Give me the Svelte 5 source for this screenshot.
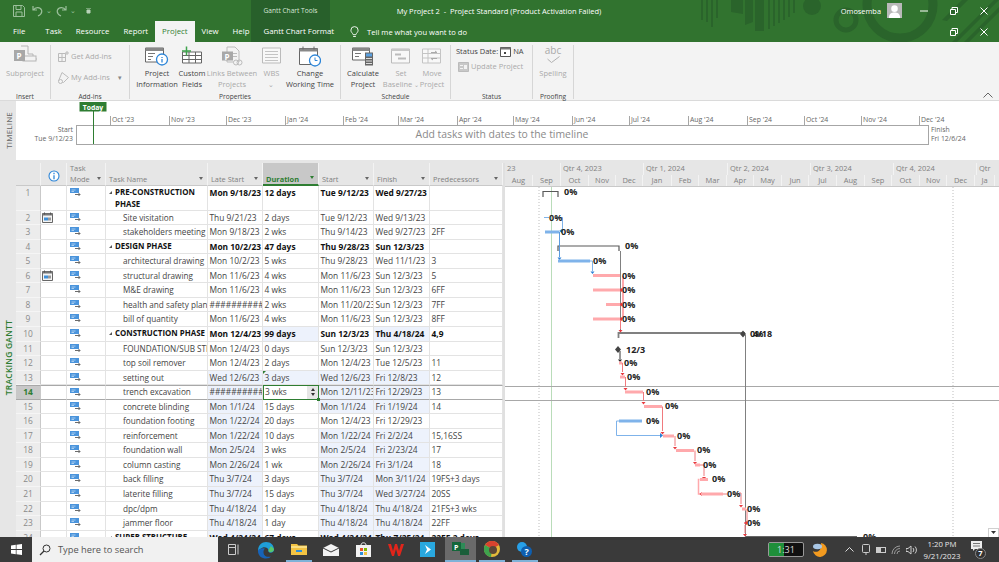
<script>
  const tabs = ['Task', 'Resource', 'Report'];

  // id, name, late start, duration, start, finish, predecessors, summary, tinted columns
  const rows = [
    [1, 'PRE-CONSTRUCTION PHASE', 'Mon 9/18/23', '12 days', 'Tue 9/12/23', 'Wed 9/27/23', '', true, ''],
    [2, 'Site visitation', 'Thu 9/21/23', '2 days', 'Tue 9/12/23', 'Wed 9/13/23', '', false, ''],
    [3, 'stakeholders meeting', 'Mon 9/18/23', '2 wks', 'Thu 9/14/23', 'Wed 9/27/23', '2FF', false, ''],
    [4, 'DESIGN PHASE', 'Mon 10/2/23', '47 days', 'Thu 9/28/23', 'Sun 12/3/23', '', true, ''],
    [5, 'architectural drawing', 'Mon 10/2/23', '5 wks', 'Thu 9/28/23', 'Wed 11/1/23', '3', false, ''],
    [6, 'structural drawing', 'Mon 11/6/23', '4 wks', 'Mon 11/6/23', 'Sun 12/3/23', '5', false, ''],
    [7, 'M&E drawing', 'Mon 11/6/23', '4 wks', 'Mon 11/6/23', 'Sun 12/3/23', '6FF', false, ''],
    [8, 'health and safety plan', '##############', '2 wks', 'Mon 11/20/23', 'Sun 12/3/23', '7FF', false, ''],
    [9, 'bill of quantity', 'Mon 11/6/23', '4 wks', 'Mon 11/6/23', 'Sun 12/3/23', '8FF', false, ''],
    [10, 'CONSTRUCTION PHASE', 'Mon 12/4/23', '99 days', 'Sun 12/3/23', 'Thu 4/18/24', '4,9', true, 'df'],
    [11, 'FOUNDATION/SUB STRUCTURE', 'Mon 12/4/23', '0 days', 'Sun 12/3/23', 'Sun 12/3/23', '', false, ''],
    [12, 'top soil remover', 'Mon 12/4/23', '2 days', 'Mon 12/4/23', 'Tue 12/5/23', '11', false, ''],
    [13, 'setting out', 'Wed 12/6/23', '3 days', 'Wed 12/6/23', 'Fri 12/8/23', '12', false, 'ldsf'],
    [14, 'trench excavation', '##############', '3 wks', 'Mon 12/11/23', 'Fri 12/29/23', '13', false, 'lsf'],
    [15, 'concrete blinding', 'Mon 1/1/24', '15 days', 'Mon 1/1/24', 'Fri 1/19/24', '14', false, 'lsf'],
    [16, 'foundation footing', 'Mon 1/22/24', '20 days', 'Mon 12/4/23', 'Fri 12/29/23', '', false, 'l'],
    [17, 'reinforcement', 'Mon 1/22/24', '10 days', 'Mon 1/22/24', 'Fri 2/2/24', '15,16SS', false, 'lsf'],
    [18, 'foundation wall', 'Mon 2/5/24', '3 wks', 'Mon 2/5/24', 'Fri 2/23/24', '17', false, 'lsf'],
    [19, 'column casting', 'Mon 2/26/24', '1 wk', 'Mon 2/26/24', 'Fri 3/1/24', '18', false, 'lsf'],
    [20, 'back filling', 'Thu 3/7/24', '3 days', 'Thu 3/7/24', 'Mon 3/11/24', '19FS+3 days', false, 'lsf'],
    [21, 'laterite filling', 'Thu 3/7/24', '15 days', 'Thu 3/7/24', 'Wed 3/27/24', '20SS', false, 'lsf'],
    [22, 'dpc/dpm', 'Thu 4/18/24', '1 day', 'Thu 4/18/24', 'Thu 4/18/24', '21FS+3 wks', false, 'lsf'],
    [23, 'jammer floor', 'Thu 4/18/24', '1 day', 'Thu 4/18/24', 'Thu 4/18/24', '22FF', false, 'lsf'],
    [24, 'SUPER STRUCTURE', 'Wed 4/24/24', '67 days', 'Wed 4/24/24', 'Thu 7/25/24', '22FF,2 days', true, 'lsf']
  ];

  const timelineTicks = [
    [111, "Oct '23"], [170, "Nov '23"], [227, "Dec '23"], [286, "Jan '24"], [344, "Feb '24"],
    [399, "Mar '24"], [458, "Apr '24"], [514, "May '24"], [573, "Jun '24"], [630, "Jul '24"],
    [689, "Aug '24"], [748, "Sep '24"], [805, "Oct '24"], [862, "Nov '24"], [920, "Dec '24"]
  ];

  const quarters = [
    ['23', 56], ['Qtr 4, 2023', 83], ['Qtr 1, 2024', 84], ['Qtr 2, 2024', 83],
    ['Qtr 3, 2024', 83], ['Qtr 4, 2024', 83], ['Qtr', 30]
  ];
  const months = [
    ['Aug', 28], ['Sep', 28], ['Oct', 28], ['Nov', 27], ['Dec', 27], ['Jan', 29], ['Feb', 27], ['Mar', 28],
    ['Apr', 27], ['May', 28], ['Jun', 27], ['Jul', 28], ['Aug', 28], ['Sep', 27], ['Oct', 28], ['Nov', 27],
    ['Dec', 28], ['Ja', 20]
  ];

  // gantt bars: x1, x2, y, blue?
  const bars = [
    [545, 559, 231, 1], [558, 590, 260, 1], [619, 642, 420, 1],
    [593, 620, 274.5, 0], [593, 620, 289, 0], [606, 620, 303.5, 0], [593, 620, 318, 0],
    [619, 622, 362, 0], [620, 625, 376, 0], [625, 643, 391, 0], [644, 662, 405.5, 0],
    [663, 674, 435, 0], [676, 694, 449.5, 0], [695, 700, 464, 0], [700, 708, 478.5, 0],
    [701, 723, 493, 0], [742, 746, 508, 0]
  ];
  const labels = [
    [564, 190], [549, 216], [561, 230], [625, 244], [593, 259], [622, 274], [622, 288], [622, 303], [622, 317],
    [750, 332], [624, 361], [627, 375], [646, 390], [665, 404], [646, 419], [677, 434], [697, 448], [703, 463],
    [712, 477], [727, 492], [747, 507], [747, 521], [863, 535]
  ];
  // link paths with their colour
  const redLinks = [
    'M620.5 319V328', 'M622 362H622.5V371', 'M625.5 376V386', 'M643.5 391V400', 'M662.5 405.5V430',
    'M675 435V445', 'M695 449.5V460', 'M700 464H704V475', 'M723 493H727', 'M739 492H741V503', 'M747 508V522H744',
    'M745 524V532'
  ];
  const redArrows = [
    [620.5, 331], [622.5, 374], [625.5, 389], [643.5, 403], [662.5, 433], [675, 448], [695, 463], [704, 478],
    [741, 506], [745, 535]
  ];
  const leftArrows = [[621, 289], [621, 303.5], [621, 318], [746, 522]];
</script>

<div class="app">
  <div class="main">
    <header class="head">
      <svg class="pattern" viewBox="0 0 999 42" aria-hidden="true">
        <g fill="#2a642b">
          <rect x="701" y="0" width="2" height="20" /><rect x="706" y="0" width="2" height="22" />
          <rect x="711" y="0" width="2" height="27" /><rect x="716" y="0" width="2" height="18" />
          <path d="M731 0h12v14l-12-2zM745 0h8v22l-8 3z" />
          <rect x="755" y="0" width="9" height="31" /><rect x="768" y="0" width="2" height="29" />
          <rect x="773" y="0" width="2" height="26" /><rect x="778" y="0" width="2" height="23" />
          <rect x="783" y="0" width="2" height="20" /><rect x="788" y="0" width="2" height="17" />
          <rect x="793" y="0" width="2" height="13" />
          <circle cx="812" cy="6" r="9" />
          <path d="M952 42L994 0h5L957 42zM964 42L999 7v5L969 42zM942 20L962 0h6L947 21z" />
        </g>
        <g fill="none" stroke="#2a642b">
          <circle cx="846" cy="20" r="10" stroke-width="5" />
          <circle cx="900" cy="5" r="33" stroke-width="9" />
        </g>
      </svg>
      <div class="context">Gantt Chart Tools</div>

      <div class="titlebar">
        <div class="qat">
          <svg width="12" height="12" viewBox="0 0 12 12"><path d="M.5.5h9l2 2v9H.5zM3 .5v4h5v-4M3 11.5V7h6v4.5" fill="none" stroke="#9cc09c" /></svg>
          <svg class="undo" width="11" height="12" viewBox="0 0 11 12"><path d="M1 1v4h4M1.500 5C3 2 8 1.500 9.500 5 10.500 8 8 10 6 11" fill="none" stroke="#9cc09c" stroke-width="1.200" /></svg>
          <span class="qat-caret">⌄</span>
          <svg class="redo" width="11" height="12" viewBox="0 0 11 12"><path d="M10 1v4H6M9.500 5C8 2 3 1.500 1.500 5 .5 8 3 10 5 11" fill="none" stroke="#9cc09c" stroke-width="1.200" /></svg>
          <span class="qat-caret">⌄</span>
          <svg class="qat-more" width="5" height="6" viewBox="0 0 5 6"><path d="M0 0h5M1 2h3v3H1z" stroke="#b9d2b9" fill="#b9d2b9" /></svg>
        </div>
        <div class="doc-title">My Project 2 &nbsp;-&nbsp; Project Standard (Product Activation Failed)</div>
        <div class="account">
          <span class="user">Omosemba</span>
          <svg class="avatar" width="15" height="15" viewBox="0 0 16 16"><rect width="16" height="16" fill="#b9b9b9" /><circle cx="8" cy="6" r="3.500" fill="#fff" /><path d="M2 16c0-5 3-6 6-6s6 1 6 6z" fill="#fff" /></svg>
          <svg class="win-btn first" width="10" height="10" viewBox="0 0 10 10"><path d="M1 5h8" stroke="#fff" /></svg>
          <svg class="win-btn" width="10" height="10" viewBox="0 0 10 10"><path d="M1.500 3.500h5v5h-5zM3 3.500V1.500h5.500v5h-2" fill="none" stroke="#fff" /></svg>
          <svg class="win-btn" width="10" height="10" viewBox="0 0 10 10"><path d="M1.500 1.500l7 7M8.500 1.500l-7 7" stroke="#fff" /></svg>
        </div>
      </div>

      <nav class="tabs">
        <span class="tab file">File</span>
        {#each tabs as tab}
          <span class="tab">{tab}</span>
        {/each}
        <span class="tab active">Project</span>
        <span class="tab">View</span>
        <span class="tab">Help</span>
        <span class="tab format">Gantt Chart Format</span>
        <svg class="bulb" width="9" height="12" viewBox="0 0 10 13"><path d="M3.500 9.500C3 7.500 1 7 1 4.500a4 4 0 0 1 8 0C9 7 7 7.500 6.500 9.500zM3.500 11.500h3" fill="none" stroke="#fff" /></svg>
        <span class="tell">Tell me what you want to do</span>
        <div class="tab-btns">
          <svg width="10" height="10" viewBox="0 0 10 10"><path d="M1.500 3.500h5v5h-5zM3 3.500V1.500h5.500v5h-2" fill="none" stroke="#fff" /></svg>
          <svg width="10" height="10" viewBox="0 0 10 10"><path d="M1.500 1.500l7 7M8.500 1.500l-7 7" stroke="#fff" /></svg>
        </div>
      </nav>
    </header>

    <section class="ribbon">
      <div class="group insert">
        <div class="group-body">
          <div class="cmd off" style="width:50px">
            <svg width="24" height="23" viewBox="0 0 24 23"><path d="M8 1h7v8h5v5h8" fill="none" stroke="#b5b5b5" /><rect x="10" y="11" width="13" height="5" fill="#f3f3f3" stroke="#b5b5b5" /><rect x="1" y="5" width="11" height="11" fill="#a8a8a8" /><text x="3.500" y="14" class="p-letter">P</text></svg>
            <span>Subproject</span>
          </div>
        </div>
        <div class="group-label">Insert</div>
      </div>

      <div class="group addins">
        <div class="group-body stack">
          <div class="line off">
            <svg width="11" height="11" viewBox="0 0 11 11"><path d="M.5 2.500h7v8h-7zM.5 6.500h7M4 2.500v8M9 0v4M7 2h4" fill="none" stroke="#bbb" /></svg>
            <span>Get Add-ins</span>
          </div>
          <div class="line off">
            <svg width="11" height="12" viewBox="0 0 11 12"><path d="M4 .5l6.500 5-5 5-5-1.500z" fill="none" stroke="#bbb" /><circle cx="2.500" cy="9.500" r="2" fill="#f3f3f3" stroke="#bbb" /></svg>
            <span>My Add-ins</span><span class="caret">▾</span>
          </div>
        </div>
        <div class="group-label">Add-ins</div>
      </div>

      <div class="group properties">
        <div class="group-body start-row">
          <div class="cmd" style="width:42px">
            <svg width="24" height="20" viewBox="0 0 24 20"><path d="M.5 1.500h18v14H.5z" fill="#fff" stroke="#666" /><path d="M.5 1.500h18v3H.5z" fill="#888" /><path d="M3 7h7M3 10h5M3 13h3" stroke="#777" /><circle cx="17" cy="13" r="5.500" fill="#fff" stroke="#2e86d8" stroke-width="1.300" /><path d="M17 10.500v1M17 12.500V16" stroke="#2e86d8" stroke-width="1.300" /></svg>
            <span>Project<br />Information</span>
          </div>
          <div class="cmd" style="width:28px">
            <svg width="22" height="20" viewBox="0 0 22 20"><path d="M1.500 5.500h19v11h-19zM1.500 9h19M1.500 13h19M8 5.500v11M14.500 5.500v11" fill="#fff" stroke="#666" /><path d="M5.500 0v9M1 4.500h9" stroke="#3fa34d" stroke-width="1.500" /></svg>
            <span>Custom<br />Fields</span>
          </div>
          <div class="cmd off" style="width:52px">
            <svg width="22" height="20" viewBox="0 0 22 20"><path d="M6 .5h8l4 4v11H6z" fill="#f3f3f3" stroke="#bbb" /><rect x="1" y="5" width="11" height="9" fill="#a8a8a8" /><text x="3.500" y="13" class="p-letter">P</text><path d="M12 7h4M12 10h4" stroke="#bbb" /><circle cx="15" cy="16" r="2.500" fill="#f3f3f3" stroke="#bbb" /><circle cx="18.500" cy="16" r="2.500" fill="none" stroke="#bbb" /></svg>
            <span>Links Between<br />Projects</span>
          </div>
          <div class="cmd off" style="width:27px">
            <svg width="20" height="20" viewBox="0 0 20 20"><path d="M.5 1.500h18v15H.5z" fill="#f8f8f8" stroke="#bbb" /><path d="M3 5h13M3 8h13M3 11h13M3 14h13" stroke="#c4c4c4" /></svg>
            <span>WBS<br /><small>⌄</small></span>
          </div>
          <div class="cmd" style="width:50px">
            <svg width="22" height="21" viewBox="0 0 22 21"><path d="M.5 2.500h18v16H.5z" fill="#fff" stroke="#666" /><path d="M.5 2.500h18v3H.5z" fill="#888" /><path d="M4 .5v3M15 .5v3" stroke="#666" /><circle cx="16" cy="14.500" r="5.500" fill="#fff" stroke="#2e86d8" stroke-width="1.300" /><path d="M16 11.500v3h2.500" fill="none" stroke="#2e86d8" /></svg>
            <span>Change<br />Working Time</span>
          </div>
        </div>
        <div class="group-label">Properties</div>
      </div>

      <div class="group schedule">
        <div class="group-body start-row">
          <div class="cmd" style="width:40px">
            <svg width="22" height="20" viewBox="0 0 22 20"><path d="M.5 1.500h17v12H.5z" fill="#fff" stroke="#666" /><path d="M.5 1.500h17v3H.5z" fill="#888" /><path d="M3 7h6M3 10h4" stroke="#777" /><rect x="13" y="6" width="8" height="13" fill="#666" /><rect x="14" y="7" width="6" height="3" fill="#5aa0e0" /><path d="M14 12h6M14 14.500h6M14 17h6" stroke="#ddd" /></svg>
            <span>Calculate<br />Project</span>
          </div>
          <div class="cmd off" style="width:36px">
            <svg width="20" height="18" viewBox="0 0 20 18"><path d="M.5 1.500h18v14H.5z" fill="#f8f8f8" stroke="#bbb" /><path d="M.5 1.500h18v2H.5z" fill="#c8c8c8" /><rect x="4" y="6" width="6" height="2" fill="#bbb" /><rect x="7" y="10" width="8" height="2" fill="#bbb" /></svg>
            <span>Set<br />Baseline <em>⌄</em></span>
          </div>
          <div class="cmd off" style="width:26px">
            <svg width="20" height="18" viewBox="0 0 20 18"><path d="M.5 1.500h18v14H.5zM6 1.500v14M.5 6h18M.5 10.500h18" fill="#f8f8f8" stroke="#c4c4c4" /><path d="M9 5h6l-2-1.500M15 11H9l2 1.500" fill="none" stroke="#aaa" /></svg>
            <span>Move<br />Project</span>
          </div>
        </div>
        <div class="group-label">Schedule</div>
      </div>

      <div class="group status">
        <div class="group-body stack tight">
          <div class="line on">
            <span>Status Date:</span>
            <svg width="11" height="11" viewBox="0 0 11 11"><path d="M.5 1.500h10v9H.5z" fill="#fff" stroke="#555" /><path d="M.5 1.500h10v2H.5z" fill="#777" /><rect x="4" y="6" width="2" height="2" fill="#444" /></svg>
            <span>NA</span>
          </div>
          <div class="line off update">
            <svg width="11" height="10" viewBox="0 0 11 10"><path d="M.5.500h10v9H.5z" fill="#c8c8c8" stroke="#bbb" /><path d="M2 3h3v1H2zM2 6h3v1H2zM6 3h3v4H6z" fill="#f3f3f3" /></svg>
            <span>Update Project</span>
          </div>
        </div>
        <div class="group-label">Status</div>
      </div>

      <div class="group proofing">
        <div class="group-body">
          <div class="cmd off spell" style="width:40px">
            <div class="abc">abc</div>
            <svg class="tick-mark" width="13" height="7" viewBox="0 0 13 7"><path d="M.5 3l4 3.500L12.500.5" fill="none" stroke="#b0b0b0" /></svg>
            <span>Spelling</span>
          </div>
        </div>
        <div class="group-label">Proofing</div>
      </div>

      <svg class="collapse" width="10" height="6" viewBox="0 0 10 6"><path d="M.5 5.500L5 1l4.500 4.500" fill="none" stroke="#666" /></svg>
    </section>

    <section class="timeline">
      <div class="strip"><span class="strip-title">TIMELINE</span></div>
      <svg class="timeline-canvas" viewBox="16 101 983 59" aria-label="Timeline">
        <rect x="76.500" y="125.500" width="852" height="19" fill="#fff" stroke="#a6a6a6" />
        {#each timelineTicks as tick}
          <path d="M{tick[0] - 0.500} 116V125" stroke="#a6a6a6" />
          <text x={tick[0] + 1} y="122" class="tick">{tick[1]}</text>
        {/each}
        <text x="73" y="132" text-anchor="end" class="tick">Start</text>
        <text x="73" y="141" text-anchor="end" class="tick">Tue 9/12/23</text>
        <text x="931" y="132" class="tick">Finish</text>
        <text x="931" y="141" class="tick">Fri 12/6/24</text>
        <text x="502" y="138" text-anchor="middle" class="hint">Add tasks with dates to the timeline</text>
        <path d="M93.500 111V144" stroke="#2e7d32" />
        <rect x="79.500" y="102" width="27" height="9.500" fill="#2e7d32" />
        <text x="93" y="109.500" text-anchor="middle" class="today">Today</text>
      </svg>
    </section>

    <section class="view">
      <div class="strip gantt-strip"><span class="strip-title green">TRACKING GANTT</span></div>

      <div class="table">
        <div class="tr thead">
          <div class="th idc"></div>
          <div class="th ind">
            <svg width="12" height="12" viewBox="0 0 12 12"><circle cx="6" cy="6" r="5" fill="#fff" stroke="#2e86d8" stroke-width="1.100" /><path d="M6 2.800v1.400M6 5.200V9.300" stroke="#2e86d8" stroke-width="1.300" /></svg>
          </div>
          <div class="th mode"><span>Task<br />Mode</span><i></i></div>
          <div class="th"><span>Task Name</span><i></i></div>
          <div class="th"><span>Late Start</span><i></i></div>
          <div class="th sorted"><span>Duration</span><i></i></div>
          <div class="th"><span>Start</span><i></i></div>
          <div class="th"><span>Finish</span><i></i></div>
          <div class="th"><span>Predecessors</span><i></i></div>
        </div>

        {#each rows as r}
          <div class="tr" class:tall={r[0] === 1} class:selected={r[0] === 14} class:bold={r[7]}>
            <div class="td idc">{r[0]}</div>
            <div class="td ind">
              {#if r[0] === 2 || r[0] === 6}
                <svg width="11" height="11" viewBox="0 0 11 11"><path d="M.5 1.500h10v9H.5z" fill="#f4f4f4" stroke="#666" /><path d="M.5 1.500h10v2H.5z" fill="#777" /><path d="M2.500.5v2M8.500.5v2" stroke="#555" /><rect x="2" y="5.500" width="4" height="3" fill="#3f8fd8" /><rect x="6" y="5.500" width="3" height="3" fill="#9a9a9a" /></svg>
              {/if}
            </div>
            <div class="td mode">
              <svg width="11" height="8" viewBox="0 0 11 8"><rect x="0" y="0" width="9" height="5" fill="#4a94dc" /><path d="M1.500 2h4M1.500 3.500h2.500" stroke="#cfe4f7" stroke-width=".7" /><path d="M5 6.500h5M8.500 5l1.500 1.500L8.500 8" fill="none" stroke="#6b6b6b" /></svg>
            </div>
            <div class="td name" class:indent={!r[7]}>
              {#if r[7]}<b class="twist"></b>{/if}<span>{r[1]}</span>
            </div>
            <div class="td" class:tint={r[8].includes('l')}>{r[2]}</div>
            <div class="td" class:tint={r[8].includes('d')} class:editing={r[0] === 14} class:changed={r[0] === 13}>
              {r[3]}
              {#if r[0] === 14}
                <span class="spin"><u></u><s></s></span>
                <span class="handle"></span>
              {/if}
            </div>
            <div class="td" class:tint={r[8].includes('s')}>{r[4]}</div>
            <div class="td" class:tint={r[8].includes('f')}>{r[5]}</div>
            <div class="td">{r[6]}</div>
          </div>
        {/each}
      </div>

      <div class="splitter"></div>

      <div class="gantt">
        <div class="tier">
          {#each quarters as q}
            <span class="cell" style="width:{q[1]}px">{q[0]}</span>
          {/each}
        </div>
        <div class="tier months">
          {#each months as m}
            <span class="cell" style="width:{m[1]}px">{m[0]}</span>
          {/each}
        </div>
        <svg class="chart" viewBox="505 186 494 351" aria-label="Gantt chart">
          <path d="M539 186V537M953 186V537" stroke="#bdbdbd" stroke-dasharray="1 2" />
          <path d="M551.500 186V537" stroke="#b9dcb9" />
          <path d="M505 385.500H999M505 399.500H999" stroke="#a8a8a8" />

          <!-- summary brackets -->
          <g fill="none" stroke="#595959">
            <path d="M543 196V190.500H558V196" stroke-width="1.200" />
            <path d="M558 250V245H619V250" stroke-width="1.200" />
            <path d="M620.500 250V330" stroke="#808080" />
            <path d="M618.500 337V332H745" stroke="#808080" stroke-width="1.800" />
            <path d="M745.500 334V537" stroke="#808080" />
            <path d="M620 350V358" stroke="#333" />
            <path d="M746 536H857" stroke="#666" stroke-width="2" />
          </g>
          <path d="M618 345l3 3.500-3 3.500-3-3.500zM743 329.500l3 3.500-3 3.500-3-3.500z" fill="#444" />
          <path d="M618 358.500h4l-2 2.500z" fill="#222" />

          <!-- blue links -->
          <g fill="none" stroke="#7fb3ea">
            <path d="M544 216.500H549M556 216.500H562.500V230" />
            <path d="M559.500 231V256" stroke="#5a9be0" />
            <path d="M590 260H592.500V270" />
            <path d="M619 420H616.500V434.500H661" />
          </g>
          <path d="M562 228v4l-3-2zM557.500 256.500h4l-2 2.500zM590.500 270.500h4l-2 2.500zM660 432v5l3-2.500z" fill="#2a7fd6" />

          <!-- red links -->
          <path d="M623 275V318" stroke="#ffa9ac" stroke-width="2" />
          <g fill="none" stroke="#f07a7e">
            {#each redLinks as d}
              <path d={d} />
            {/each}
            <path d="M699.500 478.500H698.500V493H701" stroke="#ffa9ac" stroke-width="1.500" />
          </g>
          {#each redArrows as a}
            <path d="M{a[0] - 2} {a[1] - 2}h4l-2 2.500z" fill="#e8383d" />
          {/each}
          {#each leftArrows as a}
            <path d="M{a[0] + 1} {a[1] - 2}v4l-3-2z" fill="#e8383d" />
          {/each}
          <path d="M702 491v4l-2.500-2z" fill="#e8383d" />

          {#each bars as b}
            <rect x={b[0]} y={b[2] - 1.500} width={b[1] - b[0]} height="3" fill={b[3] ? '#7fb3ea' : '#ffa9ac'} />
          {/each}

          {#each labels as l}
            <text x={l[0]} y={l[1] + 4} class="pct">0%</text>
          {/each}
          <text x="753" y="336" class="pct">4/18</text>
          <text x="626" y="352" class="pct">12/3</text>

          <rect x="988.500" y="527.500" width="10" height="9" fill="#fff" stroke="#d0d0d0" />
          <path d="M991 530h5l-2.500 3z" fill="#333" />
        </svg>
      </div>
    </section>
  </div>

  <footer class="taskbar">
    <svg class="start" width="11" height="11" viewBox="0 0 11 11"><path d="M0 1.500l4.800-.7v4.300H0zM5.500.7L11 0v5.100H5.500zM0 5.900h4.800v4.300L0 9.500zM5.500 5.900H11V11l-5.500-.8z" fill="#fff" /></svg>
    <div class="search">
      <svg width="12" height="12" viewBox="0 0 12 12"><circle cx="7.500" cy="4.500" r="3.500" fill="none" stroke="#333" /><path d="M5 7l-4 4" stroke="#333" stroke-width="1.200" /></svg>
      <span>Type here to search</span>
    </div>
    <div class="apps">
      <div class="app-icon">
        <svg width="12" height="11" viewBox="0 0 12 11"><path d="M.5.500h7v10h-7zM.5 3.500h7M10 .5v10" fill="none" stroke="#ccc" /></svg>
      </div>
      <div class="app-icon">
        <svg width="18" height="18" viewBox="0 0 18 18"><path d="M1 10C1 4 5 1 9 1c5 0 8 3.500 8 7.500 0 3-3 3.500-4.500 3-1-.5-1.500-1.500-1-2.500C11 6 6 5 3.500 8 1.500 10 1 11 1 10z" fill="#1f9ed8" /><path d="M1 10c0 5 4 7.500 8 7.500 2.500 0 4-1 5-2-3 1-7 0-7.500-3.500C6 9 8 7.500 8 7.500 4 7 1 8 1 10z" fill="#1763b8" /><path d="M14 5l3 3c0 2-2 3.500-4 3-1-.3-1.500-1-1.500-2z" fill="#58c86a" /></svg>
      </div>
      <div class="app-icon under">
        <svg width="16" height="13" viewBox="0 0 16 13"><path d="M0 2h6l1.500 1.500H16V13H0z" fill="#f3c343" /><rect x="5" y="8" width="6" height="2" fill="#2f8fd8" /><path d="M0 4h16v2H0z" fill="#fbdf83" /></svg>
      </div>
      <div class="app-icon">
        <svg width="16" height="12" viewBox="0 0 16 12"><path d="M0 4L8 0l8 4v8H0z" fill="#f2f2f2" /><path d="M0 4l8 4 8-4" fill="none" stroke="#333" /></svg>
      </div>
      <div class="app-icon">
        <svg width="15" height="15" viewBox="0 0 15 15"><path d="M0 3h15v12H0z" fill="#f2f2f2" /><path d="M5 3c0-3 5-3 5 0" fill="none" stroke="#f2f2f2" /><rect x="4" y="6" width="3" height="3" fill="#e8532b" /><rect x="8" y="6" width="3" height="3" fill="#7fba00" /><rect x="4" y="10" width="3" height="3" fill="#2f8fd8" /><rect x="8" y="10" width="3" height="3" fill="#f3c343" /></svg>
      </div>
      <div class="app-icon">
        <svg width="16" height="14" viewBox="0 0 16 14"><path d="M0 1l3 0 2 7 2-7h2l2 7 2-7h3l-4 12h-2L8 6l-2 7H4z" fill="#e1251b" /></svg>
      </div>
      <div class="app-icon">
        <svg width="15" height="15" viewBox="0 0 15 15"><rect width="15" height="15" fill="#29a8df" /><path d="M5 3l6 4.500L5 12l2-4.500z" fill="#fff" /></svg>
      </div>
      <div class="app-icon current">
        <svg width="17" height="15" viewBox="0 0 17 15"><rect x="6" y="2" width="7" height="6" fill="#2e8b57" /><rect x="8" y="8" width="9" height="6" fill="#1b5e3a" /><rect x="0" y="1" width="9" height="9" fill="#14663a" /><text x="2" y="8.500" class="p-mini">P</text></svg>
      </div>
      <div class="app-icon under">
        <svg width="16" height="16" viewBox="0 0 16 16"><circle cx="8" cy="8" r="8" fill="#e3b93a" /><path d="M8 8L1 4a8 8 0 0 1 14 0z" fill="#d8432f" /><path d="M8 8l-1 8a8 8 0 0 1-6-12z" fill="#3fa34d" /><circle cx="9" cy="9" r="4" fill="#5b4636" /></svg>
      </div>
      <div class="app-icon under">
        <svg width="15" height="16" viewBox="0 0 15 16"><circle cx="5" cy="6" r="5" fill="#27a0e8" /><circle cx="9.500" cy="10.500" r="5.500" fill="#0e5fb0" /><text x="7.500" y="13.500" class="p-help">?</text></svg>
      </div>
    </div>

    <div class="tray">
      <div class="battery"><span class="charge"></span><span class="bat-text">1:31</span></div>
      <svg class="moon" width="16" height="16" viewBox="0 0 16 16"><path d="M9 1a7 7 0 1 1-8 8c3 2 9 1 8-8z" fill="#f29a1f" /><ellipse cx="5.500" cy="4.500" rx="4.500" ry="2.800" fill="#a9c7e6" /></svg>
      <svg class="tray-chev" width="9" height="5" viewBox="0 0 9 5"><path d="M.5 4.500L4.500.5l4 4" fill="none" stroke="#ddd" /></svg>
      <svg class="tray-mic" width="8" height="11" viewBox="0 0 8 11"><rect x=".5" y=".5" width="7" height="8" rx="1" fill="none" stroke="#ccc" /><path d="M4 9v2" stroke="#ccc" /></svg>
      <svg class="tray-bat" width="11" height="6" viewBox="0 0 11 6"><rect x=".5" y=".5" width="9" height="5" fill="none" stroke="#ccc" /><rect x="1" y="1" width="4" height="4" fill="#ccc" /></svg>
      <svg class="tray-wifi" width="10" height="10" viewBox="0 0 10 10"><path d="M1 9a8 8 0 0 1 8-8M3.500 9a5.500 5.500 0 0 1 5.500-5.500M6 9a3 3 0 0 1 3-3" fill="none" stroke="#999" /></svg>
      <svg class="tray-vol" width="12" height="10" viewBox="0 0 12 10"><path d="M0 3.500h2L5 1v8L2 6.500H0z" fill="none" stroke="#ccc" /><path d="M7 3a3 3 0 0 1 0 4M9 1.500a5 5 0 0 1 0 7" fill="none" stroke="#ccc" /></svg>
      <div class="clock"><span>1:20 PM</span><span>9/21/2023</span></div>
      <div class="notify">
        <svg width="11" height="10" viewBox="0 0 11 10"><path d="M0 0h11v8H4L2 10V8H0z" fill="#eee" /><path d="M2 2.500h7M2 5h7" stroke="#777" /></svg>
        <span class="badge">7</span>
      </div>
    </div>
  </footer>
</div>

<style>
  :global(body) {
    margin: 0;
    background: #fff;
  }

  .app {
    width: 999px;
    height: 562px;
    display: flex;
    flex-direction: column;
    overflow: hidden;
    font-family: 'Open Sans', 'Noto Sans', sans-serif;
    font-size: 8.4px;
    color: #444;
  }

  .main {
    flex: 1;
    min-height: 0;
    display: flex;
    flex-direction: column;
    overflow: hidden;
  }

  /* title bar + tabs */
  .head {
    position: relative;
    height: 42px;
    flex: none;
    background: #31732f;
    color: #fff;
  }

  .pattern {
    position: absolute;
    inset: 0;
    width: 999px;
    height: 42px;
  }

  .context {
    position: absolute;
    left: 251px;
    top: 0;
    width: 79px;
    height: 42px;
    background: #28602b;
    text-align: center;
    line-height: 21px;
    font-size: 6.600px;
    color: #d9e6d9;
  }

  .titlebar {
    position: relative;
    height: 21px;
    display: flex;
    align-items: center;
  }

  .qat {
    width: 200px;
    padding-left: 13px;
    box-sizing: border-box;
    display: flex;
    align-items: center;
    color: #9cc09c;
  }

  .undo {
    margin-left: 7px;
  }

  .redo {
    margin-left: 2px;
  }

  .qat-caret {
    font-size: 7px;
    margin-left: 3px;
    width: 8px;
    line-height: 8px;
  }

  .qat-more {
    margin-left: 8px;
  }

  .doc-title {
    position: absolute;
    left: 0;
    right: 0;
    text-align: center;
    font-size: 7.500px;
    padding-right: 1px;
  }

  .account {
    margin-left: auto;
    position: relative;
    display: flex;
    align-items: center;
    padding-right: 10px;
    font-size: 7.400px;
  }

  .user {
    margin-right: 6px;
  }

  .win-btn {
    margin-left: 20px;
  }

  .win-btn.first {
    margin-left: 17px;
  }

  .tabs {
    position: relative;
    height: 21px;
    display: flex;
    align-items: center;
  }

  .tab {
    padding: 0 7px;
    font-size: 7.800px;
    line-height: 21px;
    color: #fff;
  }

  .tab.file {
    padding: 0 13px;
  }

  .tab.active {
    background: #f3f3f3;
    color: #2e7d32;
    height: 21px;
  }

  .bulb {
    margin-left: 9px;
  }

  .tell {
    margin-left: 8px;
    font-size: 7.600px;
  }

  .tab-btns {
    margin-left: auto;
    display: flex;
    gap: 20px;
    padding-right: 10px;
  }

  /* ribbon */
  .ribbon {
    position: relative;
    height: 59px;
    flex: none;
    display: flex;
    background: #f3f3f3;
    border-bottom: 1px solid #dadada;
    box-sizing: border-box;
  }

  .group {
    position: relative;
    display: flex;
    flex-direction: column;
    border-right: 1px solid #d6d6d6;
    margin: 3px 0 1px;
    box-sizing: border-box;
  }

  .insert { width: 51px; }
  .addins { width: 79px; }
  .properties { width: 211px; }
  .schedule { width: 110px; }
  .status { width: 82px; }
  .proofing { width: 41px; }

  .group-body {
    flex: 1;
    display: flex;
    justify-content: center;
  }

  .start-row {
    justify-content: flex-start;
  }

  .properties .start-row {
    padding-left: 6px;
  }

  .schedule .start-row {
    padding-left: 2px;
  }

  .stack {
    flex-direction: column;
    justify-content: flex-start;
    gap: 8px;
    padding: 5px 0 0 7px;
  }

  .stack.tight {
    gap: 2px;
    padding: 0 0 0 5px;
  }

  .group-label {
    height: 8px;
    line-height: 11px;
    text-align: center;
    font-size: 6.600px;
    color: #444;
  }

  .cmd {
    display: flex;
    flex-direction: column;
    align-items: center;
    text-align: center;
    line-height: 10.500px;
    font-size: 7.500px;
    white-space: nowrap;
    color: #444;
  }

  .cmd > svg {
    height: 23px;
  }

  .cmd small {
    font-size: 7px;
  }

  .cmd em {
    font-style: normal;
    font-size: 6px;
  }

  .off,
  .cmd.off {
    color: #a9a9a9;
  }

  .line {
    display: flex;
    align-items: center;
    gap: 2px;
    font-size: 7.500px;
    line-height: 13px;
    white-space: nowrap;
  }

  .line.on {
    color: #444;
  }

  .line.update {
    padding-left: 2px;
  }

  .caret {
    margin-left: 6px;
    font-size: 7px;
    color: #888;
  }

  .abc {
    font-size: 10px;
    line-height: 11px;
    color: #a9a9a9;
  }

  .spell .tick-mark {
    height: 7px;
    margin-bottom: 5px;
  }

  .collapse {
    position: absolute;
    right: 6px;
    bottom: 2px;
  }

  .p-letter {
    font: bold 8px 'Open Sans', sans-serif;
    fill: #fff;
  }

  .p-mini {
    font: bold 7px 'Open Sans', sans-serif;
    fill: #fff;
  }

  .p-help {
    font: bold 9px 'Open Sans', sans-serif;
    fill: #fff;
  }

  /* timeline */
  .timeline {
    height: 59px;
    flex: none;
    display: flex;
    background: #fff;
  }

  .strip {
    width: 16px;
    flex: none;
    background: #e6e6e6;
    display: flex;
    justify-content: center;
    box-sizing: border-box;
  }

  .strip-title {
    writing-mode: vertical-rl;
    transform: rotate(180deg);
    font-size: 8px;
    letter-spacing: .2px;
    color: #666;
    align-self: center;
  }

  .strip-title.green {
    color: #2e7d32;
    font-size: 8.500px;
    font-weight: 600;
    align-self: flex-start;
  }

  .gantt-strip {
    padding-top: 157px;
  }

  .timeline-canvas {
    width: 983px;
    height: 59px;
    display: block;
  }

  .tick {
    font: 6.900px 'Open Sans', sans-serif;
    fill: #666;
  }

  .hint {
    font: 10.400px 'Open Sans', sans-serif;
    fill: #8a8a8a;
  }

  .today {
    font: bold 6.800px 'Open Sans', sans-serif;
    fill: #fff;
  }

  /* sheet */
  .view {
    flex: 1;
    min-height: 0;
    display: flex;
    border-top: 3px solid #e6e6e6;
    overflow: hidden;
  }

  .table {
    width: 487px;
    flex: none;
  }

  .tr {
    display: grid;
    grid-template-columns: 25px 26px 39px 102px 55px 56px 55px 56px 73px;
    height: 14.560px;
    box-sizing: border-box;
    line-height: 13.500px;
    color: #444;
  }

  .tr.tall {
    height: 24.600px;
  }

  .tr.bold {
    font-weight: 700;
    color: #111;
  }

  .thead {
    height: 23px;
    background: #e6e6e6;
    color: #808080;
    font-size: 7.400px;
  }

  .th {
    position: relative;
    display: flex;
    align-items: flex-end;
    padding: 0 0 1px 3px;
    line-height: 10.500px;
    border-right: 1px solid #f3f3f3;
    border-bottom: 1px solid #c9c9c9;
    box-sizing: border-box;
  }

  .th i {
    position: absolute;
    right: 4px;
    bottom: 5px;
    border: 2.500px solid transparent;
    border-top: 3px solid #666;
    border-bottom: 0;
  }

  .th.ind {
    justify-content: center;
    align-items: center;
    padding: 4px 0 0;
  }

  .th.sorted {
    background: #c8c8c8;
    color: #2e7d32;
    font-weight: 700;
    border-bottom: 2px solid #2e7d32;
    padding-bottom: 0;
  }

  .th.sorted i {
    border-top-color: #2e7d32;
  }

  .td {
    position: relative;
    padding-left: 1.500px;
    border-right: 1px solid #e3e3e3;
    border-bottom: 1px solid #e3e3e3;
    white-space: nowrap;
    overflow: hidden;
    box-sizing: border-box;
    background: #fff;
  }

  .td.idc {
    background: #ececec;
    color: #8a8a8a;
    font-weight: 400;
    text-align: center;
    padding: 0;
    border-right: 1px solid #c9c9c9;
    border-bottom: 1px solid #f5f5f5;
  }

  .td.ind {
    padding: 1px 0 0 1px;
  }

  .td.ind svg,
  .td.mode svg {
    display: block;
  }

  .td.mode {
    padding: 2px 0 0 3px;
  }

  .td.name {
    padding-left: 3px;
    display: flex;
    align-items: flex-start;
    font-size: 8.200px;
  }

  .tr.bold .td.name {
    font-size: 7.900px;
  }

  .tr.tall .td.name span {
    white-space: normal;
    line-height: 11.500px;
    padding-top: 1px;
  }

  .td.name.indent {
    padding-left: 17px;
  }

  .twist {
    flex: none;
    width: 0;
    height: 0;
    margin: 5px 3px 0 0;
    border-bottom: 3px solid #555;
    border-left: 3px solid transparent;
  }

  .td.tint {
    background: #edf2fc;
  }

  .tr.selected .td {
    border-top: 1px solid #a8a8a8;
    border-bottom: 1px solid #a8a8a8;
    line-height: 12.500px;
  }

  .tr.selected .td.idc {
    background: #c8c8c8;
    color: #2e7d32;
    font-weight: 700;
  }

  .td.changed::before {
    content: '';
    position: absolute;
    left: 0;
    top: 0;
    border-top: 3px solid #2e7d32;
    border-right: 3px solid transparent;
  }

  .tr.selected .td.editing {
    border: 1px solid #2e7d32;
    overflow: visible;
    padding-left: 1px;
    z-index: 1;
  }

  .spin {
    position: absolute;
    right: 0;
    top: 0;
    width: 11px;
    height: 12.500px;
    background: #e6e6e6;
    display: flex;
    flex-direction: column;
    align-items: center;
    justify-content: space-evenly;
  }

  .spin u {
    border: 2.500px solid transparent;
    border-bottom: 3px solid #333;
    border-top: 0;
  }

  .spin s {
    border: 2.500px solid transparent;
    border-top: 3px solid #333;
    border-bottom: 0;
  }

  .handle {
    position: absolute;
    right: -2px;
    bottom: -2px;
    width: 3px;
    height: 3px;
    background: #2e7d32;
  }

  .splitter {
    width: 2px;
    flex: none;
    background: #e0e0e0;
  }

  /* gantt */
  .gantt {
    flex: 1;
    min-width: 0;
    overflow: hidden;
    display: flex;
    flex-direction: column;
  }

  .tier {
    height: 11.500px;
    display: flex;
    background: #e6e6e6;
    color: #808080;
    font-size: 7.500px;
    line-height: 11.500px;
    flex: none;
    white-space: nowrap;
  }

  .tier .cell {
    flex: none;
    box-sizing: border-box;
    padding-left: 2px;
    border-right: 1px solid #f3f3f3;
    overflow: hidden;
  }

  .tier.months {
    border-bottom: 1px solid #c9c9c9;
  }

  .tier.months .cell {
    text-align: center;
    padding: 0;
  }

  .chart {
    width: 494px;
    height: 351px;
    display: block;
    flex: none;
  }

  .pct {
    font: 700 9px 'Open Sans', sans-serif;
    fill: #222;
  }

  /* windows taskbar */
  .taskbar {
    height: 25px;
    flex: none;
    background: #3a3a3a;
    display: flex;
    align-items: center;
    color: #e8e8e8;
  }

  .start {
    margin: 0 10px 0 11px;
    flex: none;
  }

  .search {
    width: 186px;
    height: 25px;
    flex: none;
    background: #f1f1f1;
    display: flex;
    align-items: center;
    gap: 7px;
    padding-left: 7px;
    box-sizing: border-box;
    color: #555;
    font-size: 9.300px;
  }

  .apps {
    display: flex;
  }

  .app-icon {
    width: 26px;
    height: 25px;
    margin: 0 3.150px;
    flex: none;
    display: flex;
    align-items: center;
    justify-content: center;
    box-sizing: border-box;
  }

  .app-icon.under {
    border-bottom: 2px solid #7fb2d8;
  }

  .app-icon.current {
    width: 31px;
    margin: 0 .650px;
    background: #6a6a6a;
    border-bottom: 2px solid #7fb2d8;
  }

  .tray {
    margin-left: auto;
    display: flex;
    align-items: center;
    padding-right: 13px;
  }

  .battery {
    position: relative;
    width: 36px;
    height: 15px;
    background: #111;
    border: 1px solid #999;
    border-radius: 2px;
    box-sizing: border-box;
  }

  .charge {
    position: absolute;
    left: 0;
    top: 0;
    bottom: 0;
    width: 15px;
    background: #1f8f3a;
  }

  .bat-text {
    position: absolute;
    left: 8px;
    top: 0;
    font-size: 9px;
    line-height: 13px;
    color: #ddd;
  }

  .moon { margin-left: 8px; }
  .tray-chev { margin-left: 17px; }
  .tray-mic { margin-left: 8px; }
  .tray-bat { margin-left: 6px; }
  .tray-wifi { margin-left: 4px; }
  .tray-vol { margin-left: 5px; }

  .clock {
    display: flex;
    flex-direction: column;
    align-items: center;
    font-size: 7.800px;
    line-height: 12px;
    margin: 0 11px 0 6px;
    width: 36px;
  }

  .notify {
    position: relative;
    width: 15px;
    height: 18px;
  }

  .badge {
    position: absolute;
    left: 4px;
    top: 7px;
    width: 11px;
    height: 11px;
    border-radius: 50%;
    background: #333;
    border: 1px solid #888;
    box-sizing: border-box;
    font-size: 7.500px;
    font-weight: 700;
    line-height: 9px;
    text-align: center;
    color: #fff;
  }
</style>
